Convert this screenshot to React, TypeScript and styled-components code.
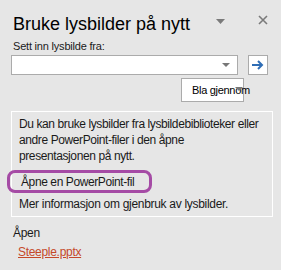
import React from 'react';
import styled, {createGlobalStyle} from 'styled-components';

const GlobalStyle = createGlobalStyle`
  html, body {
    margin: 0;
    padding: 0;
    background: #e6e6e6;
  }
  body {
    font-family: "Liberation Sans", Arial, sans-serif;
    color: #1a1a1a;
  }
`

const Pane = styled.div`
  width: 281px;
  height: 270px;
  box-sizing: border-box;
  padding: 12px 13px 0 11px;
  background: #e6e6e6;
`

const Header = styled.div`
  display: flex;
  align-items: flex-start;
  height: 25px;
`

const Title = styled.h1`
  margin: 0;
  flex: 1;
  font-size: 18px;
  font-weight: normal;
  line-height: 24px;
  padding-left: 2px;
  color: #000;
`

const IconButton = styled.button<{ $top: number }>`
  margin-top: ${p => p.$top}px;
  border: none;
  background: transparent;
  padding: 0;
  display: flex;
  line-height: 0;
`

const Label = styled.div`
  font-size: 11px;
  padding: 2px 0 0 2px;
  height: 14px;
  line-height: 14px;
  letter-spacing: -0.2px;
`

const ComboRow = styled.div`
  display: flex;
  gap: 10px;
  margin-top: 2px;
`

const Combo = styled.div`
  width: 232px;
  height: 20px;
  box-sizing: border-box;
  border: 1px solid #ababab;
  background: #fff;
  display: flex;
  align-items: center;
  justify-content: flex-end;
  padding-right: 7px;
`

const GoButton = styled.button`
  width: 20px;
  height: 20px;
  box-sizing: border-box;
  border: 1px solid #ababab;
  background: #fff;
  padding: 0;
  display: flex;
  align-items: center;
  justify-content: center;
`

const BrowseRow = styled.div`
  display: flex;
  padding-left: 170px;
  margin-top: 3px;
`

const BrowseButton = styled.button`
  width: 63px;
  height: 24px;
  box-sizing: border-box;
  border: 1px solid #ababab;
  background: #fff;
  font-family: inherit;
  font-size: 11px;
  letter-spacing: -0.3px;
  color: #000;
  padding: 0 0 0 10px;
  display: flex;
  align-items: center;
  position: relative;
  white-space: nowrap;
  overflow: visible;
`

const Caret = styled.span`
  position: absolute;
  left: 53px;
  top: 8px;
  width: 0;
  height: 0;
  border-left: 4px solid transparent;
  border-right: 4px solid transparent;
  border-top: 4px solid #777;
`

const InfoBox = styled.div`
  margin-top: 9px;
  width: 262px;
  box-sizing: border-box;
  border: 1px solid #fff;
  padding: 4px 3px 4px 7px;
  font-size: 12px;
  line-height: 16px;
  letter-spacing: -0.4px;
`

const InfoText = styled.p`
  margin: 0;
  white-space: nowrap;
`

const OpenFile = styled.div`
  margin: 6px 0 0 -12px;
  width: 145px;
  height: 23px;
  box-sizing: border-box;
  border: 3px solid #a54ba5;
  border-radius: 8px;
  display: flex;
  align-items: center;
  padding-left: 11px;
`

const MoreInfo = styled.div`
  margin-top: 3px;
  height: 16px;
  letter-spacing: -0.3px;
`

const Recent = styled.div`
  margin-top: 8px;
  padding-left: 2px;
  font-size: 12px;
  line-height: 16px;
  letter-spacing: -0.3px;
`

const FileLink = styled.a`
  display: block;
  margin: 3px 0 0 7px;
  color: #c5492a;
  text-decoration: underline;
  font-size: 12px;
  line-height: 16px;
  letter-spacing: -0.3px;
`

const App = () => {
  return (
    <Pane>
      <GlobalStyle/>
      <Header>
        <Title>Bruke lysbilder på nytt</Title>
        <IconButton $top={7} style={{marginRight: 33}}>
          <svg width="9" height="5" viewBox="0 0 9 5"><path d="M0 0h9L4.5 5z" fill="#7a7a7a"/></svg>
        </IconButton>
        <IconButton $top={3}>
          <svg width="10" height="10" viewBox="0 0 10 10"><path d="M1 1l8 8M9 1l-8 8" stroke="#7a7a7a" strokeWidth="1.6"/></svg>
        </IconButton>
      </Header>
      <Label>Sett inn lysbilde fra:</Label>
      <ComboRow>
        <Combo>
          <svg width="8" height="4" viewBox="0 0 8 4"><path d="M0 0h8L4 4z" fill="#777"/></svg>
        </Combo>
        <GoButton>
          <svg width="12" height="10" viewBox="0 0 12 10">
            <path d="M0 5h10M6 1l4 4-4 4" stroke="#2e6db5" strokeWidth="2" fill="none"/>
          </svg>
        </GoButton>
      </ComboRow>
      <BrowseRow>
        <BrowseButton>Bla gjennom<Caret/></BrowseButton>
      </BrowseRow>
      <InfoBox>
        <InfoText>
          Du kan bruke lysbilder fra lysbildebiblioteker eller<br/>
          andre PowerPoint-filer i den åpne<br/>
          presentasjonen på nytt.
        </InfoText>
        <OpenFile>Åpne en PowerPoint-fil</OpenFile>
        <MoreInfo>Mer informasjon om gjenbruk av lysbilder.</MoreInfo>
      </InfoBox>
      <Recent>Åpen</Recent>
      <FileLink href="#">Steeple.pptx</FileLink>
    </Pane>
  );
};

export default App;
